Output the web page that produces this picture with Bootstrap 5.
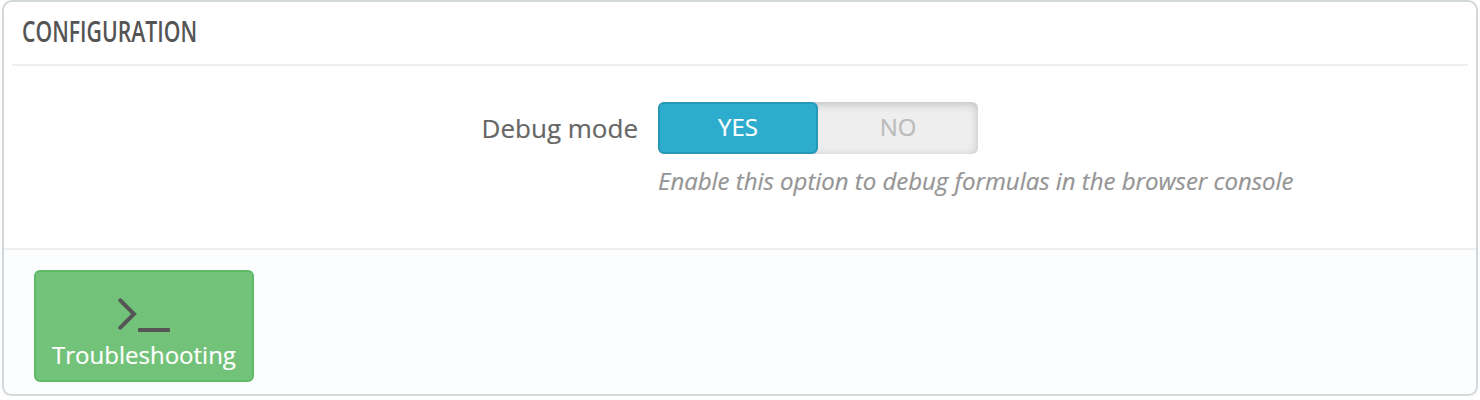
<!DOCTYPE html>
<html lang="en">
<head>
<meta charset="utf-8">
<meta name="viewport" content="width=device-width, initial-scale=1">
<title>Configuration</title>
<link href="https://cdn.jsdelivr.net/npm/bootstrap@5.3.0/dist/css/bootstrap.min.css" rel="stylesheet">
<style>
body{font-family:"Open Sans","Noto Sans",sans-serif;color:#555;background:#fff;line-height:1;-webkit-text-stroke:.2px currentColor}
.config-panel{width:1476px;height:396px;margin:0 2px;border:2px solid #d3d8db;border-radius:10px;box-shadow:0 2px 3px rgba(0,0,0,.06);overflow:hidden}
.config-panel .card-header{height:64px;margin:0 8px;padding:0 10px;background:#fff;border-bottom:2px solid #eee}
.panel-title{font-family:"Open Sans",sans-serif;font-size:28px;font-weight:600;line-height:36px;display:inline-block;transform:scaleX(.758);transform-origin:0 50%;margin:0;padding-top:11px;-webkit-text-stroke:0}
.config-panel .card-body{padding:36px 0 0}
.debug-label{width:654px;padding-right:20px;font-size:26px;line-height:52px;color:#666}
.switch-box{width:320px;height:52px;border-radius:6px;background:#eee;box-shadow:inset 0 2px 10px rgba(0,0,0,.2)}
.switch-box span{width:160px;font-size:24px;line-height:46px;text-align:center;border:2px solid transparent;border-radius:6px;color:#bbb}
.switch-box .switch-on{background:#2eacce;border-color:#2799b8;color:#fff}
.help-line{font-size:24px;font-style:italic;line-height:32px;color:#959595;margin:11px 0 0;white-space:nowrap;letter-spacing:-.02px}
.config-panel .card-footer{height:146px;padding:20px 30px;background:#fcfdfe;border-top:2px solid #eee}
.trouble-btn{width:220px;height:112px;padding:0;background:#72c279;border:2px solid #5fba68;border-radius:6px;color:#fff;font-size:24px;line-height:32px}
.trouble-btn:hover{background:#72c279;border-color:#5fba68;color:#fff}
.trouble-btn svg{margin-top:26px;margin-bottom:7px}
</style>
</head>
<body>
<section class="card config-panel">
  <div class="card-header"><h1 class="panel-title">CONFIGURATION</h1></div>
  <div class="card-body d-flex align-items-start">
    <label class="debug-label text-end flex-shrink-0">Debug mode</label>
    <div>
      <div class="switch-box d-flex"><span class="switch-on">YES</span><span>NO</span></div>
      <p class="help-line">Enable this option to debug formulas in the browser console</p>
    </div>
  </div>
  <div class="card-footer">
    <button type="button" class="btn trouble-btn d-flex flex-column align-items-center justify-content-start">
      <svg class="flex-shrink-0" width="52" height="34" viewBox="0 0 52 34" fill="none" stroke="#555" aria-hidden="true"><path d="M2.3 2.3 16 16 2.3 29.7" stroke-width="4" stroke-linecap="round"/><rect x="20" y="30" width="32" height="4" rx="1" fill="#555" stroke="none"/></svg>
      <span>Troubleshooting</span>
    </button>
  </div>
</section>
<script src="https://cdn.jsdelivr.net/npm/bootstrap@5.3.0/dist/js/bootstrap.bundle.min.js"></script>
</body>
</html>
